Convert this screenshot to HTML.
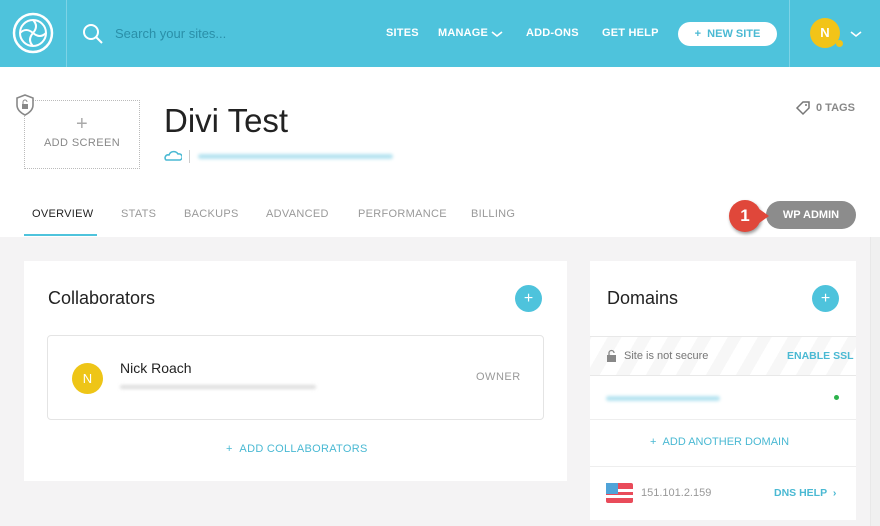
<!DOCTYPE html>
<html><head><meta charset="utf-8"><style>
*{margin:0;padding:0;box-sizing:border-box}
body{width:880px;height:526px;overflow:hidden;background:#f4f3f4;font-family:"Liberation Sans",sans-serif;position:relative}
.a{position:absolute}
.hdr{left:0;top:0;width:880px;height:67px;background:#4ec3dc}
.nav{color:#fff;font-size:11px;font-weight:bold;top:27px;letter-spacing:.2px}
.tab{top:208px;font-size:11px;color:#999;letter-spacing:.3px}
.card{background:#fff}
.blue{color:#4ab9d3}
.blur{filter:blur(1.5px)}
</style></head><body>
<div class="a hdr"></div>
<div class="a" style="left:66px;top:0;width:1px;height:67px;background:#7dd3e6"></div>
<div class="a" style="left:789px;top:0;width:1px;height:67px;background:#7dd3e6"></div>
<svg class="a" style="left:12px;top:12px" width="42" height="42" viewBox="0 0 42 42"><circle cx="21" cy="21" r="19" fill="none" stroke="#fff" stroke-width="2.5"/><circle cx="21" cy="21" r="13" fill="none" stroke="#fff" stroke-width="2"/><g stroke="#fff" stroke-width="2" fill="none"><path d="M21 8q6 6 0 13"/><path d="M34 21q-6 6-13 0"/><path d="M21 34q-6-6 0-13"/><path d="M8 21q6-6 13 0"/></g></svg>
<svg class="a" style="left:82px;top:23px" width="22" height="22" viewBox="0 0 22 22"><circle cx="9" cy="9" r="7" fill="none" stroke="#fff" stroke-width="2"/><path d="M14 14l6 6" stroke="#fff" stroke-width="2"/></svg>
<div class="a" style="left:115px;top:26px;font-size:13px;color:#2a8fa8">Search your sites...</div>
<div class="a nav" style="left:386px">SITES</div>
<div class="a nav" style="left:438px">MANAGE</div>
<svg class="a" style="left:491px;top:30px" width="12" height="8"><path d="M1 2l5 4 5-4" stroke="#fff" stroke-width="1.6" fill="none"/></svg>
<div class="a nav" style="left:526px">ADD-ONS</div>
<div class="a nav" style="left:602px">GET HELP</div>
<div class="a" style="left:678px;top:22px;width:99px;height:24px;border-radius:12px;background:#fff;color:#4ab9d3;font-size:11px;font-weight:bold;text-align:center;line-height:24px">+&nbsp; NEW SITE</div>
<div class="a" style="left:810px;top:18px;width:30px;height:30px;border-radius:50%;background:#f2c418;color:#fff;font-weight:bold;font-size:13px;text-align:center;line-height:30px">N</div>
<div class="a" style="left:836px;top:40px;width:7px;height:7px;border-radius:50%;background:#f2c418"></div>
<svg class="a" style="left:850px;top:30px" width="12" height="8"><path d="M1 2l5 4 5-4" stroke="#fff" stroke-width="1.6" fill="none"/></svg>

<div class="a" style="left:0;top:67px;width:880px;height:170px;background:#fff"></div>
<div class="a" style="left:24px;top:100px;width:116px;height:69px;border:1px dotted #bbb;text-align:center;color:#888;font-size:11px;letter-spacing:.4px"><div style="font-size:20px;margin-top:13px;line-height:20px;color:#aaa">+</div><div style="margin-top:3px">ADD SCREEN</div></div>
<svg class="a" style="left:14px;top:93px" width="22" height="24" viewBox="0 0 22 24"><path d="M11 2l8 3v7c0 5-4 8-8 10-4-2-8-5-8-10V5z" fill="#fff" stroke="#888" stroke-width="1.6"/><rect x="8" y="11" width="6" height="5" fill="#888"/><path d="M9 11V9a2 2 0 0 1 4 0" stroke="#888" fill="none"/></svg>
<div class="a" style="left:164px;top:102px;font-size:33px;color:#222">Divi Test</div>
<svg class="a" style="left:164px;top:150px" width="18" height="12"><path d="M2 10h14a3 3 0 0 0-2-6 5 5 0 0 0-9 1 3 3 0 0 0-3 5z" fill="none" stroke="#4ab9d3" stroke-width="1.5"/></svg>
<div class="a" style="left:189px;top:150px;width:1px;height:13px;background:#ccc"></div>
<div class="a blur" style="left:198px;top:154px;width:195px;height:5px;background:#b5e3f0;border-radius:3px"></div>
<svg class="a" style="left:795px;top:100px" width="16" height="16"><path d="M2 8l6-6h6v6l-6 6z" fill="none" stroke="#777" stroke-width="1.5"/><circle cx="11" cy="5" r="1" fill="#777"/></svg>
<div class="a" style="left:816px;top:102px;font-size:11px;font-weight:bold;color:#888">0 TAGS</div>
<div class="a tab" style="left:32px;color:#222;font-weight:normal">OVERVIEW</div>
<div class="a" style="left:24px;top:234px;width:73px;height:2px;background:#4ec3dc"></div>
<div class="a tab" style="left:121px">STATS</div>
<div class="a tab" style="left:184px">BACKUPS</div>
<div class="a tab" style="left:266px">ADVANCED</div>
<div class="a tab" style="left:358px">PERFORMANCE</div>
<div class="a tab" style="left:471px">BILLING</div>
<div class="a" style="left:766px;top:201px;width:90px;height:28px;border-radius:14px;background:#8c8c8c;color:#fff;font-size:11px;font-weight:bold;text-align:center;line-height:28px">WP ADMIN</div>
<div class="a" style="left:729px;top:200px;width:32px;height:32px;border-radius:50%;background:#e0473a;color:#fff;font-size:17px;font-weight:bold;text-align:center;line-height:32px;box-shadow:1px 2px 3px rgba(0,0,0,.4)">1</div>
<div class="a" style="left:755px;top:206px;width:0;height:0;border-top:10px solid transparent;border-bottom:10px solid transparent;border-left:14px solid #e0473a"></div>

<div class="a card" style="left:24px;top:261px;width:543px;height:220px"></div>
<div class="a" style="left:48px;top:288px;font-size:18px;color:#222">Collaborators</div>
<div class="a" style="left:515px;top:285px;width:27px;height:27px;border-radius:50%;background:#4ec3dc;color:#fff;text-align:center;line-height:27px;font-size:16px">+</div>
<div class="a" style="left:47px;top:335px;width:497px;height:85px;border:1px solid #e4e4e4;border-radius:4px"></div>
<div class="a" style="left:72px;top:363px;width:31px;height:31px;border-radius:50%;background:#eec517;color:#fff;font-size:13px;text-align:center;line-height:31px">N</div>
<div class="a" style="left:120px;top:360px;font-size:14px;color:#222">Nick Roach</div>
<div class="a blur" style="left:120px;top:385px;width:196px;height:4px;background:#ddd;border-radius:3px"></div>
<div class="a" style="left:476px;top:371px;font-size:11px;color:#999;letter-spacing:.5px">OWNER</div>
<div class="a blue" style="left:226px;top:443px;font-size:11px;letter-spacing:.3px">+&nbsp;&nbsp;ADD COLLABORATORS</div>

<div class="a card" style="left:590px;top:261px;width:266px;height:259px"></div>
<div class="a" style="left:607px;top:288px;font-size:18px;color:#222">Domains</div>
<div class="a" style="left:812px;top:285px;width:27px;height:27px;border-radius:50%;background:#4ec3dc;color:#fff;text-align:center;line-height:27px;font-size:16px">+</div>
<div class="a" style="left:590px;top:336px;width:266px;height:40px;border-top:1px solid #e8e8e8;border-bottom:1px solid #e8e8e8;background:repeating-linear-gradient(-60deg,#fff 0 14px,#f7f7f7 14px 26px)"></div>
<svg class="a" style="left:606px;top:349px" width="11" height="13"><rect x="1" y="6" width="9" height="7" fill="#888"/><path d="M3 6V4a2.5 2.5 0 0 1 5 0" stroke="#888" fill="none" stroke-width="1.3"/></svg>
<div class="a" style="left:624px;top:350px;font-size:11px;color:#777">Site is not secure</div>
<div class="a blue" style="left:787px;top:350px;font-size:10.5px;font-weight:bold">ENABLE SSL</div>
<div class="a blur" style="left:606px;top:396px;width:114px;height:5px;background:#b5e3f0;border-radius:3px"></div>
<div class="a" style="left:834px;top:395px;width:5px;height:5px;border-radius:50%;background:#2cb24b"></div>
<div class="a" style="left:590px;top:419px;width:266px;height:1px;background:#eee"></div>
<div class="a blue" style="left:650px;top:436px;font-size:11px">+&nbsp;&nbsp;ADD ANOTHER DOMAIN</div>
<div class="a" style="left:590px;top:466px;width:266px;height:1px;background:#eee"></div>
<svg class="a" style="left:606px;top:483px" width="27" height="20"><rect width="27" height="20" rx="2" fill="#e94b5a"/><rect y="6" width="27" height="3" fill="#fff"/><rect y="12" width="27" height="3" fill="#fff"/><rect width="12" height="11" fill="#4fa3d8"/></svg>
<div class="a" style="left:641px;top:487px;font-size:11px;color:#999">151.101.2.159</div>
<div class="a blue" style="left:774px;top:487px;font-size:10.5px;font-weight:bold">DNS HELP&nbsp;&nbsp;›</div>
<div class="a" style="left:870px;top:237px;width:10px;height:289px;background:#f0f0f0;border-left:1px solid #e8e8e8"></div>
</body></html>
